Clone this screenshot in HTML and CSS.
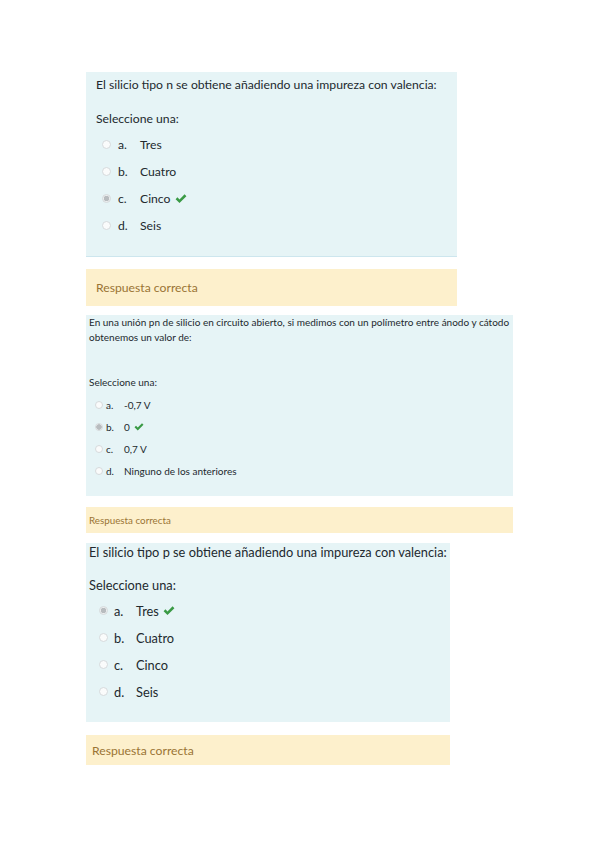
FILE: index.html
```html
<!DOCTYPE html>
<html lang="es">
<head>
<meta charset="utf-8">
<link rel="stylesheet" href="styles.css">
</head>
<body>
<main class="page">
  <section class="que q1">
    <p class="qtext">El silicio tipo n se obtiene añadiendo una impureza con valencia:</p>
    <p class="prompt">Seleccione una:</p>
    <ul class="answers">
      <li><span class="radio"></span><span class="let">a.</span><span class="ans">Tres</span></li>
      <li><span class="radio"></span><span class="let">b.</span><span class="ans">Cuatro</span></li>
      <li><span class="radio checked"></span><span class="let">c.</span><span class="ans">Cinco</span><svg class="check" viewBox="0 0 16 12"><path d="M0.8 6.2 L3.2 3.8 L6 6.6 L12.8 -0.2 L15.2 2.2 L6 11.4 Z" fill="#3a9a45"/></svg></li>
      <li><span class="radio"></span><span class="let">d.</span><span class="ans">Seis</span></li>
    </ul>
  </section>
  <div class="outcome o1">Respuesta correcta</div>

  <section class="que q2">
    <p class="qtext">En una unión pn de silicio en circuito abierto, si medimos con un polímetro entre ánodo y cátodo<br>obtenemos un valor de:</p>
    <p class="prompt">Seleccione una:</p>
    <ul class="answers">
      <li><span class="radio"></span><span class="let">a.</span><span class="ans">-0,7 V</span></li>
      <li><span class="radio checked"></span><span class="let">b.</span><span class="ans">0</span><svg class="check" viewBox="0 0 16 12"><path d="M0.8 6.2 L3.2 3.8 L6 6.6 L12.8 -0.2 L15.2 2.2 L6 11.4 Z" fill="#3a9a45"/></svg></li>
      <li><span class="radio"></span><span class="let">c.</span><span class="ans">0,7 V</span></li>
      <li><span class="radio"></span><span class="let">d.</span><span class="ans">Ninguno de los anteriores</span></li>
    </ul>
  </section>
  <div class="outcome o2">Respuesta correcta</div>

  <section class="que q3">
    <p class="qtext">El silicio tipo p se obtiene añadiendo una impureza con valencia:</p>
    <p class="prompt">Seleccione una:</p>
    <ul class="answers">
      <li><span class="radio checked"></span><span class="let">a.</span><span class="ans">Tres</span><svg class="check" viewBox="0 0 16 12"><path d="M0.8 6.2 L3.2 3.8 L6 6.6 L12.8 -0.2 L15.2 2.2 L6 11.4 Z" fill="#3a9a45"/></svg></li>
      <li><span class="radio"></span><span class="let">b.</span><span class="ans">Cuatro</span></li>
      <li><span class="radio"></span><span class="let">c.</span><span class="ans">Cinco</span></li>
      <li><span class="radio"></span><span class="let">d.</span><span class="ans">Seis</span></li>
    </ul>
  </section>
  <div class="outcome o3">Respuesta correcta</div>
</main>
</body>
</html>
```
FILE: styles.css
```css
html, body { margin: 0; padding: 0; background: #fff; }
body { font-family: Lato, "Open Sans", sans-serif; color: #22292e; }
p { margin: 0; }
ul { margin: 0; padding: 0; list-style: none; }

.page {
  padding: 72px 0 0 86px;
  display: flex;
  flex-direction: column;
  align-items: flex-start;
}

.que { background: #e6f4f6; box-sizing: border-box; }
.qtext { white-space: nowrap; }
.outcome {
  background: #fdf0cc;
  color: #9a7434;
  box-sizing: border-box;
  display: flex;
  align-items: center;
}

.answers li { display: flex; align-items: center; }
.radio {
  box-sizing: border-box;
  width: 9px; height: 9px;
  border: 1px solid #d6dadc;
  border-radius: 50%;
  background: #fafbfb;
  flex: none;
}
.radio.checked { background: radial-gradient(circle, #b8bcbf 0 2.5px, #eceeef 3px); }
.check { flex: none; }

/* Question 1 */
.q1 { width: 371px; height: 185px; padding: 4px 0 0 10px; border-bottom: 1px solid #cde6ee; font-size: 12.2px; }
.q1 .qtext { line-height: 18px; }
.q1 .prompt { line-height: 18px; margin-top: 16px; margin-bottom: 3px; }
.q1 .answers li { height: 27px; padding-left: 6px; }
.q1 .let { width: 22px; margin-left: 7px; }
.q1 .check { width: 12px; height: 10px; margin-left: 4px; }
.o1 { width: 371px; height: 37px; margin-top: 12px; padding-left: 10px; font-size: 12.2px; }

/* Question 2 */
.q2 { width: 427px; height: 181px; margin-top: 9px; padding: 0 0 0 3px; font-size: 10px; }
.q2 .qtext { line-height: 15px; }
.q2 .prompt { line-height: 15px; margin-top: 30px; margin-bottom: 4px; }
.q2 .answers li { height: 22px; padding-left: 6px; }
.q2 .radio { width: 8px; height: 8px; }
.q2 .let { width: 18px; margin-left: 3px; }
.q2 .check { width: 10px; height: 8px; margin-left: 4px; }
.o2 { width: 427px; height: 26px; margin-top: 11px; padding-left: 3px; font-size: 9.8px; }

/* Question 3 */
.q3 { width: 364px; height: 179px; margin-top: 10px; padding: 0 0 0 3px; font-size: 12.8px; }
.q3 .qtext { line-height: 18px; }
.q3 .prompt { line-height: 18px; margin-top: 15px; margin-bottom: 3px; }
.q3 .answers li { height: 27px; padding-left: 10px; }
.q3 .let { width: 22px; margin-left: 6px; }
.q3 .check { width: 12px; height: 10px; margin-left: 4px; }
.o3 { width: 364px; height: 30px; margin-top: 13px; padding-left: 6px; font-size: 12.2px; }
```
